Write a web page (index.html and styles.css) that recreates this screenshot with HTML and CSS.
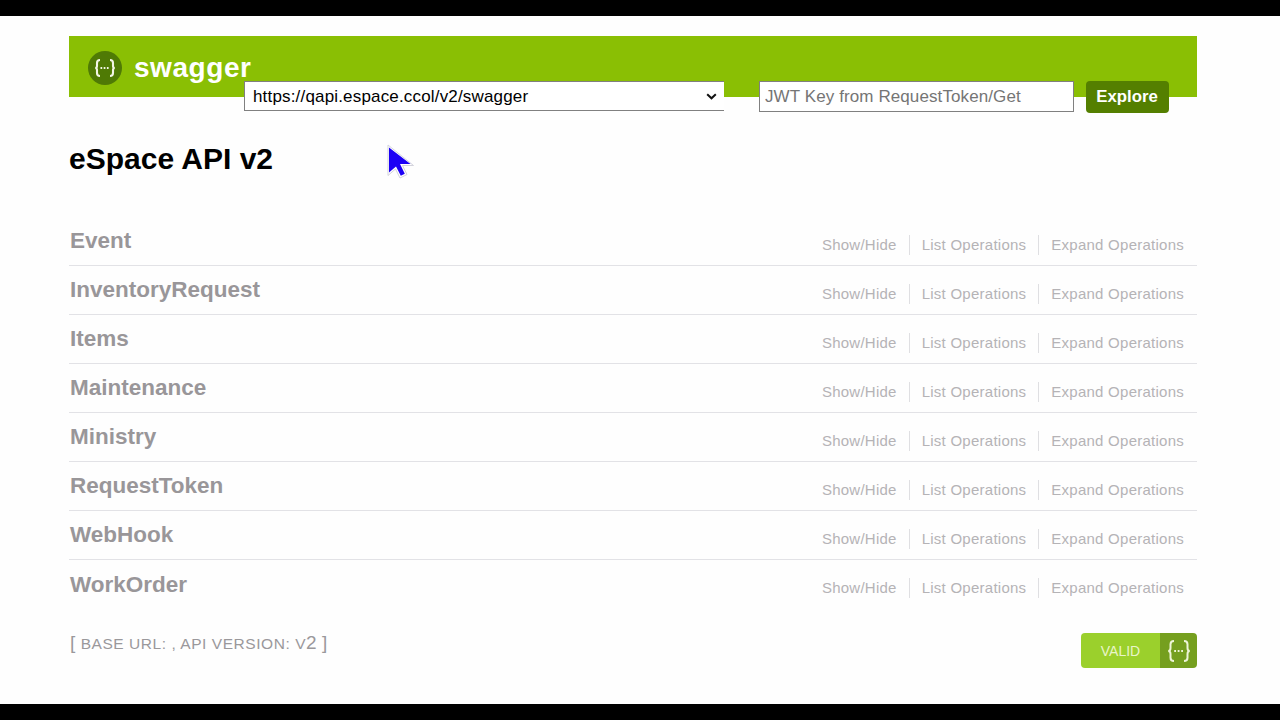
FILE: index.html
```html
<!DOCTYPE html>
<html lang="en">
<head>
<meta charset="utf-8">
<title>eSpace API v2</title>
<link rel="stylesheet" href="styles.css">
</head>
<body>
<div class="letterbox"></div>
<main class="page">
  <header class="header">
    <a class="brand">
      <svg class="logo" viewBox="0 0 34 34" width="34" height="34" aria-hidden="true">
        <circle cx="17" cy="17" r="17" fill="#4f7a05"/>
        <path d="M12 9c-2.500 0-3 1-3 3v3c0 1.300-.7 2-1.800 2 1.100 0 1.800.7 1.800 2v3c0 2 .5 3 3 3M22 9c2.500 0 3 1 3 3v3c0 1.300.7 2 1.800 2-1.100 0-1.800.7-1.800 2v3c0 2-.5 3-3 3" fill="none" stroke="#f2f5e6" stroke-width="2.100"/>
        <path d="M12.500 17h9" fill="none" stroke="#f2f5e6" stroke-width="1.800" stroke-dasharray="1.700 1.500"/>
      </svg>
      <span class="brand-name">swagger</span>
    </a>
    <form class="explore">
      <select class="spec-select">
        <option>https://qapi.espace.ccol/v2/swagger</option>
      </select>
      <svg class="select-arrow" viewBox="0 0 11 7" width="11" height="7" aria-hidden="true">
        <path d="M1.200 1.200L5.500 5.300L9.800 1.200" fill="none" stroke="#111" stroke-width="2"/>
      </svg>
      <input class="key-input" type="text" placeholder="JWT Key from RequestToken/Get">
      <button class="explore-btn" type="button">Explore</button>
    </form>
  </header>

  <h1 class="title">eSpace API v2</h1>

  <ul class="resources">
    <li class="resource"><h2 class="resource-name">Event</h2><div class="ops"><a>Show/Hide</a><a>List Operations</a><a>Expand Operations</a></div></li>
    <li class="resource"><h2 class="resource-name">InventoryRequest</h2><div class="ops"><a>Show/Hide</a><a>List Operations</a><a>Expand Operations</a></div></li>
    <li class="resource"><h2 class="resource-name">Items</h2><div class="ops"><a>Show/Hide</a><a>List Operations</a><a>Expand Operations</a></div></li>
    <li class="resource"><h2 class="resource-name">Maintenance</h2><div class="ops"><a>Show/Hide</a><a>List Operations</a><a>Expand Operations</a></div></li>
    <li class="resource"><h2 class="resource-name">Ministry</h2><div class="ops"><a>Show/Hide</a><a>List Operations</a><a>Expand Operations</a></div></li>
    <li class="resource"><h2 class="resource-name">RequestToken</h2><div class="ops"><a>Show/Hide</a><a>List Operations</a><a>Expand Operations</a></div></li>
    <li class="resource"><h2 class="resource-name">WebHook</h2><div class="ops"><a>Show/Hide</a><a>List Operations</a><a>Expand Operations</a></div></li>
    <li class="resource"><h2 class="resource-name">WorkOrder</h2><div class="ops"><a>Show/Hide</a><a>List Operations</a><a>Expand Operations</a></div></li>
  </ul>

  <footer class="footer">
    <h4 class="meta"><span class="bracket">[</span> BASE URL: , API VERSION: V<span class="bracket">2</span> <span class="bracket">]</span></h4>
    <div class="badge">
      <span class="badge-label">VALID</span>
      <span class="badge-icon">
        <svg viewBox="0 0 26 24" width="26" height="24" aria-hidden="true">
          <path d="M8 2c-2.800 0-3.500 1-3.500 3.300v3.700c0 1.800-.8 3-2.300 3 1.500 0 2.300 1.200 2.300 3v3.700c0 2.300.7 3.300 3.500 3.300M18 2c2.800 0 3.500 1 3.500 3.300v3.700c0 1.800.8 3 2.300 3-1.500 0-2.300 1.200-2.300 3v3.700c0 2.300-.7 3.300-3.500 3.300" fill="none" stroke="#eef5d8" stroke-width="2"/>
          <path d="M8.200 12h10" fill="none" stroke="#eef5d8" stroke-width="1.800" stroke-dasharray="1.800 1.700"/>
        </svg>
      </span>
    </div>
  </footer>

  <svg class="cursor" viewBox="0 0 28 36" width="28" height="36" aria-hidden="true">
    <path d="M2 2V32.500L9.500 26L14 35L21 31.500L16.500 22.500H27.500Z" fill="#ffffff" stroke="#d3d3dc" stroke-width="1"/>
    <path d="M3 4.500V29.500L10 23.500L14.800 32.800L18.800 30.800L14 21H24.500Z" fill="#1c00f5"/>
  </svg>
</main>
<div class="letterbox"></div>
</body>
</html>
```
FILE: styles.css
```css
* { box-sizing: border-box; }
html, body { height: 100%; }
body {
  margin: 0;
  display: flex;
  flex-direction: column;
  background: #000;
  font-family: "Liberation Sans", Arial, sans-serif;
  overflow: hidden;
}
.letterbox { height: 16px; flex: none; background: #000; }
.page {
  position: relative;
  flex: 1;
  background: #fefefe;
  padding: 20px 83px 0 69px;
}
.header {
  display: flex;
  align-items: flex-start;
  height: 61px;
  padding: 15px 28px 0 19px;
  background: #8abf04;
}
.brand {
  display: flex;
  align-items: center;
  gap: 12px;
  width: 156px;
  flex: none;
  white-space: nowrap;
}
.logo { flex: none; display: block; }
.brand-name {
  color: #fff;
  font-size: 28px;
  font-weight: 700;
  letter-spacing: .55px;
  line-height: 32px;
}
.explore {
  display: flex;
  align-items: flex-start;
  flex: 1;
  margin-top: 30px;
  position: relative;
}
.spec-select {
  appearance: none;
  width: 480px;
  height: 30px;
  margin: 0;
  padding: 0 30px 0 8px;
  border: 1px solid #808080;
  border-right: 0;
  border-radius: 0;
  background: #fff;
  color: #000;
  font: 17px "Liberation Sans", Arial, sans-serif;
  letter-spacing: .17px;
}
.select-arrow {
  position: absolute;
  left: 462px;
  top: 12px;
  pointer-events: none;
}
.key-input {
  width: 315px;
  height: 31px;
  margin-left: 35px;
  padding: 0 5px;
  border: 1px solid #808080;
  border-radius: 0;
  background: #fff;
  font: 17px "Liberation Sans", Arial, sans-serif;
  letter-spacing: .1px;
}
.key-input::placeholder { color: #757575; opacity: 1; }
.explore-btn {
  width: 83px;
  height: 32px;
  margin-left: 12px;
  padding: 0 1px 0 0;
  border: 0;
  border-radius: 4px;
  background: #547f00;
  color: #fff;
  font: 700 16.800px "Liberation Sans", Arial, sans-serif;
}
.title {
  margin: 44px 0 0;
  color: #000;
  font-size: 30px;
  font-weight: 700;
  line-height: 36px;
}
.resources {
  list-style: none;
  margin: 40px 0 0;
  padding: 0;
}
.resource {
  display: flex;
  align-items: center;
  justify-content: space-between;
  height: 49px;
  padding: 0 13px 0 1px;
  border-bottom: 1px solid #e2e2e6;
}
.resource:last-child { border-bottom: 0; }
.resource-name {
  margin: 0;
  color: #999699;
  font-size: 22.500px;
  font-weight: 700;
  line-height: 26px;
}
.ops {
  display: flex;
  align-items: center;
  margin-top: 7px;
}
.ops a {
  padding: 0 12px;
  border-left: 1px solid #dfdfe2;
  color: #b5b3b6;
  font-size: 15px;
  letter-spacing: .25px;
  line-height: 20px;
}
.ops a:first-child { border-left: 0; }
.ops a:last-child { padding-right: 0; }
.footer {
  display: flex;
  align-items: flex-start;
  justify-content: space-between;
  margin-top: 8px;
}
.meta {
  margin: 15px 0 0 1px;
  color: #9a989b;
  font-size: 15.500px;
  font-weight: 400;
  letter-spacing: .55px;
  line-height: 22px;
}
.bracket { font-size: 19px; }
.badge {
  display: flex;
  width: 116px;
  height: 35px;
  margin-top: 16px;
  border-radius: 4px;
  overflow: hidden;
}
.badge-label {
  display: flex;
  align-items: center;
  justify-content: center;
  width: 79px;
  background: #9bd02c;
  color: #e9f5c9;
  font-size: 14px;
}
.badge-icon {
  display: flex;
  align-items: center;
  justify-content: center;
  flex: 1;
  background: #759f1f;
}
.cursor {
  position: absolute;
  left: 386px;
  top: 127px;
}
```
